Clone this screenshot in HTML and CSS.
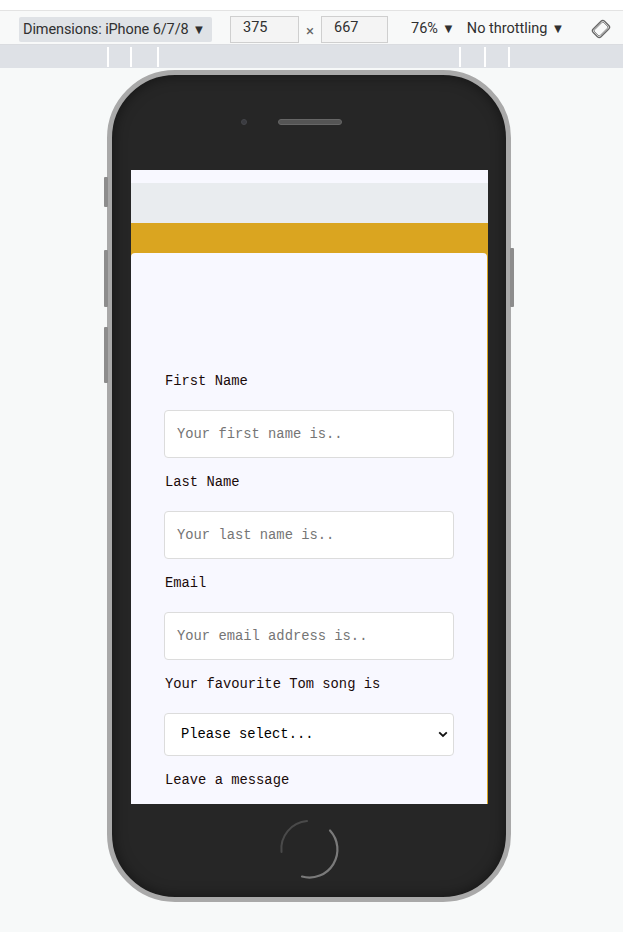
FILE: index.html
```html
<!DOCTYPE html>
<html>
<head>
<meta charset="utf-8">
<link rel="stylesheet" href="styles.css">
</head>
<body>
<div class="top-strip"></div>
<div class="toolbar">
  <div class="dim-select">Dimensions: iPhone 6/7/8 <span class="tri">▼</span></div>
  <div class="num num-w">375</div>
  <span class="times">×</span>
  <div class="num">667</div>
  <div class="drop zoom">76% <span class="tri">▼</span></div>
  <div class="drop throttle">No throttling <span class="tri">▼</span></div>
  <svg class="rotate" width="20" height="20" viewBox="0 0 20 20">
    <g transform="rotate(45 10 10)" fill="none" stroke="#666" stroke-width="1.3">
      <rect x="4.5" y="2" width="11" height="16" rx="2.5"/>
      <rect x="6" y="3.5" width="8" height="13" rx="1.5" stroke-width="0.8"/>
    </g>
  </svg>
</div>
<div class="ruler">
  <span class="tick t1"></span><span class="tick t2"></span><span class="tick t3"></span>
  <span class="tick t4"></span><span class="tick t5"></span><span class="tick t6"></span>
</div>
<div class="stage">
  <div class="phone">
    <span class="side-btn l1"></span>
    <span class="side-btn l2"></span>
    <span class="side-btn l3"></span>
    <span class="side-btn r1"></span>
    <div class="phone-top">
      <span class="camera"></span>
      <span class="speaker"></span>
    </div>
    <div class="screen">
      <div class="strip"></div>
      <div class="navband"></div>
      <div class="goldband"></div>
      <div class="card-wrap">
        <form class="card">
          <label class="lbl">First Name</label>
          <div class="inp placeholder">Your first name is..</div>
          <label class="lbl">Last Name</label>
          <div class="inp placeholder">Your last name is..</div>
          <label class="lbl">Email</label>
          <div class="inp placeholder">Your email address is..</div>
          <label class="lbl">Your favourite Tom song is</label>
          <div class="sel">
            <span>Please select...</span>
            <svg width="10" height="7" viewBox="0 0 10 7"><path d="M1.2 1.3 L5 5 L8.8 1.3" fill="none" stroke="#111" stroke-width="1.8"/></svg>
          </div>
          <label class="lbl">Leave a message</label>
          <div class="inp tall"></div>
        </form>
      </div>
    </div>
    <div class="phone-bottom">
      <svg class="home" width="66" height="66" viewBox="0 0 66 66">
        <path d="M5.5 36 A28 28 0 0 1 31 5" fill="none" stroke="#4a4a4a" stroke-width="2" stroke-linecap="round"/>
        <path d="M54 14.5 A28 28 0 0 1 26 60.5" fill="none" stroke="#7a7a7a" stroke-width="2.2" stroke-linecap="round"/>
      </svg>
    </div>
  </div>
</div>
</body>
</html>
```
FILE: styles.css
```css
* { box-sizing: border-box; }
html, body { margin: 0; padding: 0; }
body {
  width: 623px;
  height: 932px;
  overflow: hidden;
  background: #f7f9f9;
  font-family: Roboto, "Liberation Sans", sans-serif;
}
.top-strip {
  height: 11px;
  background: #ffffff;
  border-bottom: 1px solid #e3e3e3;
}
.toolbar {
  height: 34px;
  background: #f8f9f9;
  border-bottom: 1px solid #dadce0;
  display: flex;
  align-items: center;
  font-size: 14.5px;
  color: #303030;
}
.dim-select {
  margin-left: 19px;
  width: 193px;
  height: 25px;
  background: #dfe2e6;
  border-radius: 2px;
  display: flex;
  align-items: center;
  padding-left: 4px;
  margin-top: 3px;
  letter-spacing: -0.1px;
}
.tri { font-size: 13px; margin-left: 4px; }
.num {
  width: 67px;
  height: 27px;
  border: 1px solid #cfcfcf;
  background: #f4f4f4;
  padding-left: 12px;
  padding-bottom: 4px;
  display: flex;
  align-items: center;
  margin-top: 3px;
}
.num-w { margin-left: 18px; width: 69px; }
.times { margin: 6px 7px 0 7px; color: #666; font-size: 15px; }
.drop { margin-top: 1px; display: flex; align-items: center; }
.zoom { margin-left: 23px; }
.throttle { margin-left: 12px; }
.rotate { margin-left: 27px; margin-top: 3px; }
.ruler {
  height: 23px;
  background: #dee1e6;
  display: flex;
  align-items: center;
}
.tick { width: 2px; height: 20px; background: #ffffff; }
.t1 { margin-left: 107px; }
.t2 { margin-left: 21px; }
.t3 { margin-left: 25px; }
.t4 { margin-left: 300px; }
.t5 { margin-left: 23px; }
.t6 { margin-left: 22px; }
.stage { padding-top: 2px; }
.phone {
  position: relative;
  margin-left: 107px;
  width: 404px;
  height: 832px;
  border: 5px solid #a9a9a9;
  border-radius: 68px;
  background: #262626;
  box-shadow: inset 0 0 14px rgba(0,0,0,0.5);
  display: flex;
  flex-direction: column;
}
.side-btn {
  position: absolute;
  width: 4px;
  background: #8d8d8d;
  border-radius: 1px;
}
.l1 { left: -8px; top: 102px; height: 30px; }
.l2 { left: -8px; top: 175px; height: 57px; }
.l3 { left: -8px; top: 252px; height: 56px; }
.r1 { right: -8px; top: 173px; height: 59px; }
.phone-top {
  height: 95px;
  display: flex;
  align-items: flex-start;
  padding-top: 44px;
  padding-left: 129px;
}
.camera {
  width: 6px;
  height: 6px;
  border-radius: 50%;
  background: #3a3b40;
  border: 1px solid #44454a;
}
.speaker {
  margin-left: 31px;
  margin-top: 0px;
  width: 64px;
  height: 6px;
  border-radius: 3px;
  background: #555555;
  border: 1px solid #666666;
}
.screen {
  margin-left: 19px;
  width: 357px;
  height: 634px;
  background: #f8f8ff;
  overflow: hidden;
  display: flex;
  flex-direction: column;
}
.strip { height: 13px; background: #f8f8ff; flex-shrink: 0; }
.navband { height: 40px; background: #e9ecef; flex-shrink: 0; }
.goldband { height: 30px; background: #daa520; flex-shrink: 0; }
.card-wrap { background: #daa520; flex: 1; padding-right: 1px; }
.card {
  background: #f8f8ff;
  border-radius: 4px 4px 0 0;
  height: 100%;
  padding: 121px 0 0 34px;
  display: flex;
  flex-direction: column;
  align-items: flex-start;
  font-family: "Liberation Mono", "DejaVu Sans Mono", monospace;
  font-size: 13.8px;
  color: #111;
}
.lbl {
  line-height: 16px;
  height: 16px;
  margin-bottom: 20px;
  color: #1a0a0a;
}
.inp {
  width: 290px;
  height: 48px;
  margin-left: -1px;
  background: #ffffff;
  border: 1px solid #dcdcdc;
  border-radius: 4px;
  margin-bottom: 17px;
  display: flex;
  align-items: center;
  padding-left: 12px;
  flex-shrink: 0;
}
.placeholder { color: #757575; }
.sel {
  width: 290px;
  height: 43px;
  margin-left: -1px;
  background: #ffffff;
  border: 1px solid #dcdcdc;
  border-radius: 4px;
  margin-bottom: 17px;
  display: flex;
  align-items: center;
  justify-content: space-between;
  padding-left: 16px;
  padding-right: 5px;
  color: #000;
  flex-shrink: 0;
}
.tall { height: 90px; }
.phone-bottom {
  flex: 1;
  display: flex;
  justify-content: center;
  padding-top: 12px;
  padding-left: 0px;
}
.home { display: block; }
```
